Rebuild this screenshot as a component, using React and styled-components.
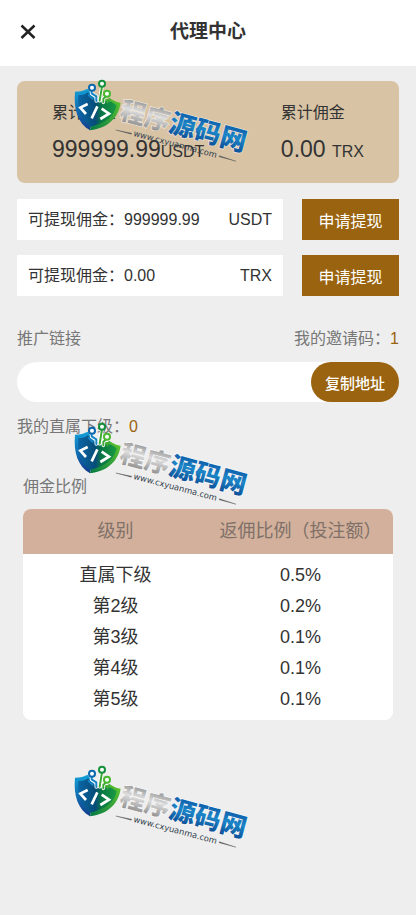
import React, { useState } from 'react';
import styled, { createGlobalStyle } from 'styled-components';

const GlobalStyle = createGlobalStyle`
  * {
    box-sizing: border-box;
  }

  body {
    margin: 0;
    background: #eeeeee;
    color: #333;
    font-family: "Liberation Sans", "Noto Sans CJK SC", sans-serif;
    font-size: 16px;
    line-height: 24px;
  }

  button, input {
    font-family: inherit;
    border: none;
    padding: 0;
  }

  button {
    cursor: pointer;
  }
`;

const Page = styled.div`
  position: relative;
  min-height: 100vh;
  overflow: hidden;
`;

const Header = styled.header`
  display: grid;
  grid-template-columns: 56px 1fr 56px;
  align-items: center;
  height: 66px;
  padding-bottom: 2px;
  background: #fff;

  h1 {
    margin: 0;
    font-size: 19px;
    font-weight: bold;
    text-align: center;
  }
`;

const CloseButton = styled.button`
  display: flex;
  align-items: center;
  justify-content: center;
  height: 40px;
  background: transparent;
  color: #222;
`;

const Main = styled.main`
  padding: 15px 17px;
`;

const Summary = styled.section`
  display: flex;
  justify-content: space-between;
  padding: 20px 35px 13px;
  margin-bottom: 16px;
  border-radius: 8px;
  background: #d8c3a5;
`;

const Total = styled.div`
  .amount {
    margin-top: 6px;
    font-size: 23px;
    line-height: 36px;
  }

  small {
    font-size: 16px;
  }
`;

const WithdrawRow = styled.div`
  display: flex;
  gap: 19px;
  margin-bottom: 15px;
`;

const Balance = styled.div`
  flex: 1;
  display: flex;
  align-items: center;
  justify-content: space-between;
  padding: 0 11px;
  background: #fff;
`;

const WithdrawButton = styled.button`
  width: 97px;
  height: 41px;
  background: #9a630f;
  color: #fff;
  font-size: 16px;
`;

const InfoLine = styled.div`
  display: flex;
  justify-content: space-between;
  color: #777;

  b {
    color: #9a630f;
    font-weight: normal;
  }
`;

const Promotion = styled.section`
  padding-top: 16px;
`;

const LinkBox = styled.div`
  display: flex;
  height: 40px;
  margin: 11px 0 13px;
  border-radius: 20px;
  background: #fff;

  input {
    flex: 1;
    min-width: 0;
    padding: 0 16px;
    border-radius: 20px;
    background: transparent;
    outline: none;
    font-size: 16px;
  }

  button {
    width: 88px;
    border-radius: 20px;
    background: #9a630f;
    color: #fff;
    font-size: 15px;
    font-weight: 500;
  }
`;

const Rates = styled.section`
  padding: 36px 6px 0;

  h2 {
    margin: 0 0 10px;
    color: #777;
    font-size: 16px;
    font-weight: normal;
  }
`;

const RateTable = styled.table`
  width: 100%;
  table-layout: fixed;
  border-collapse: collapse;
  border-radius: 8px;
  overflow: hidden;
  background: #fff;
  font-size: 18px;
  line-height: 31px;
  text-align: center;

  th {
    height: 45px;
    padding: 0;
    background: #d2b09c;
    color: #807068;
    font-weight: normal;
    white-space: nowrap;
  }

  td {
    padding: 0;
  }

  tbody tr:first-child td {
    padding-top: 6px;
  }

  tbody tr:last-child td {
    padding-bottom: 5px;
  }
`;

// sits over the whole page and lets clicks through
const StampLayer = styled.div`
  position: absolute;
  inset: 0;
  display: flex;
  flex-direction: column;
  gap: 243px;
  padding: 71px 60px 0;
  pointer-events: none;

  svg {
    flex: none;
    width: 200px;
    height: 100px;
    overflow: visible;
  }
`;

const balances = [
  { amount: '999999.99', unit: 'USDT' },
  { amount: '0.00', unit: 'TRX' },
];

const rates = [
  ['直属下级', '0.5%'],
  ['第2级', '0.2%'],
  ['第3级', '0.1%'],
  ['第4级', '0.1%'],
  ['第5级', '0.1%'],
];

function Stamp({ id }) {
  return (
    <svg viewBox="0 0 600 300" aria-hidden="true">
      <defs>
        <linearGradient id={`${id}-left`} x1="0" y1="0" x2="0" y2="1">
          <stop offset="0" stopColor="#12a0d8" />
          <stop offset="1" stopColor="#123c8c" />
        </linearGradient>
        <linearGradient id={`${id}-right`} x1="1" y1="0" x2="0" y2="1">
          <stop offset="0" stopColor="#62c62e" />
          <stop offset="1" stopColor="#047a45" />
        </linearGradient>
        <linearGradient id={`${id}-core`} x1="0" y1="0" x2="1" y2="0">
          <stop offset="0" stopColor="#0b65a6" />
          <stop offset="0.45" stopColor="#064d78" />
          <stop offset="0.6" stopColor="#087644" />
          <stop offset="1" stopColor="#199b42" />
        </linearGradient>
        <linearGradient id={`${id}-gray`} x1="0" y1="0" x2="0" y2="1">
          <stop offset="0.2" stopColor="#8f8f8f" />
          <stop offset="0.5" stopColor="#dedede" />
          <stop offset="0.9" stopColor="#8a8a8a" />
        </linearGradient>
        <linearGradient id={`${id}-blue`} x1="0" y1="0" x2="0" y2="1">
          <stop offset="0.2" stopColor="#0d5ba8" />
          <stop offset="0.5" stopColor="#1c86c8" />
          <stop offset="0.9" stopColor="#0b4a93" />
        </linearGradient>
      </defs>

      <path d="M45 62C60 62 73 58 82 53L110 86L90 178C54 157 40 116 45 62Z" fill={`url(#${id}-left)`} />
      <path d="M110 86L152 83C162 90 172 94 182 95C176 137 148 170 90 178Z" fill={`url(#${id}-right)`} />
      <path d="M55 73C68 73 77 69 84 64L104 86L154 92L170 103C163 137 135 158 91 167C64 149 52 116 55 73Z" fill={`url(#${id}-core)`} />

      <g fill="none" strokeLinecap="round" strokeLinejoin="round">
        <g stroke="#fff" strokeWidth="11">
          <path d="M95 58V68L109 77V90M126 45L119 89M139 75L130 82V94" />
        </g>
        <g strokeWidth="6">
          <path d="M95 58V67L109 76V90M86 72L98 83" stroke="#1684c5" />
          <path d="M126 46L119 89M139 76L130 83V94M148 84L142 94" stroke="#3ca936" />
        </g>
        <circle cx="96" cy="50" r="9" fill="#fff" stroke="#0c69ae" strokeWidth="6" />
        <circle cx="126" cy="38" r="9" fill="#fff" stroke="#16903d" strokeWidth="6" />
        <circle cx="141" cy="68" r="9" fill="#fff" stroke="#49b82f" strokeWidth="6" />
        <g stroke="#fff" strokeWidth="8" strokeLinecap="butt" strokeLinejoin="miter">
          <path d="M83 99L61 110L78 129M112 106L95 142M125 113L147 128L121 144" />
        </g>
      </g>

      <g transform="translate(210 128) rotate(15)">
        <text
          x="-30"
          y="22"
          fontSize="79"
          fontWeight="900"
          fontFamily="'Noto Sans CJK SC', sans-serif"
          stroke="#fff"
          strokeOpacity="0.6"
          strokeWidth="4"
          paintOrder="stroke"
        >
          <tspan fill={`url(#${id}-gray)`} fontSize="76">程序</tspan>
          <tspan fill={`url(#${id}-blue)`}>源码网</tspan>
        </text>
      </g>
      <g transform="translate(219 194) rotate(15)">
        <text fontSize="25" fill="#33414d" fontFamily="'DejaVu Sans', sans-serif">
          www.cxyuanma.com
        </text>
        <path d="M-54 -3L-6 -6V-3ZM266 -9L318 -6L266 -6Z" fill="#555" stroke="#555" />
      </g>
    </svg>
  );
}

export default function App() {
  const [link, setLink] = useState('');

  return (
    <Page>
      <GlobalStyle />
      <Header>
        <CloseButton type="button" aria-label="关闭">
          <svg width="16" height="16" viewBox="0 0 16 16" fill="none" stroke="currentColor" strokeWidth="2.5">
            <path d="M1.5 1.5L14.5 14M14.5 1.5L1.5 14" />
          </svg>
        </CloseButton>
        <h1>代理中心</h1>
      </Header>

      <Main>
        <Summary>
          <Total>
            <div>累计佣金</div>
            <div className="amount">999999.99<small>USDT</small></div>
          </Total>
          <Total>
            <div>累计佣金</div>
            <div className="amount">0.00 <small>TRX</small></div>
          </Total>
        </Summary>

        {balances.map(({ amount, unit }) => (
          <WithdrawRow key={unit}>
            <Balance>
              <span>可提现佣金：{amount}</span>
              <span>{unit}</span>
            </Balance>
            <WithdrawButton type="button">申请提现</WithdrawButton>
          </WithdrawRow>
        ))}

        <Promotion>
          <InfoLine>
            <label htmlFor="promo-link">推广链接</label>
            <span>我的邀请码：<b>1</b></span>
          </InfoLine>
          <LinkBox>
            <input id="promo-link" type="text" value={link} onChange={(e) => setLink(e.target.value)} />
            <button type="button" onClick={() => navigator.clipboard?.writeText(link)}>复制地址</button>
          </LinkBox>
          <InfoLine>
            <span>我的直属下级：<b>0</b></span>
          </InfoLine>
        </Promotion>

        <Rates>
          <h2>佣金比例</h2>
          <RateTable>
            <thead>
              <tr>
                <th>级别</th>
                <th>返佣比例（投注额）</th>
              </tr>
            </thead>
            <tbody>
              {rates.map(([level, rate]) => (
                <tr key={level}>
                  <td>{level}</td>
                  <td>{rate}</td>
                </tr>
              ))}
            </tbody>
          </RateTable>
        </Rates>
      </Main>

      <StampLayer>
        <Stamp id="top" />
        <Stamp id="middle" />
        <Stamp id="bottom" />
      </StampLayer>
    </Page>
  );
}
